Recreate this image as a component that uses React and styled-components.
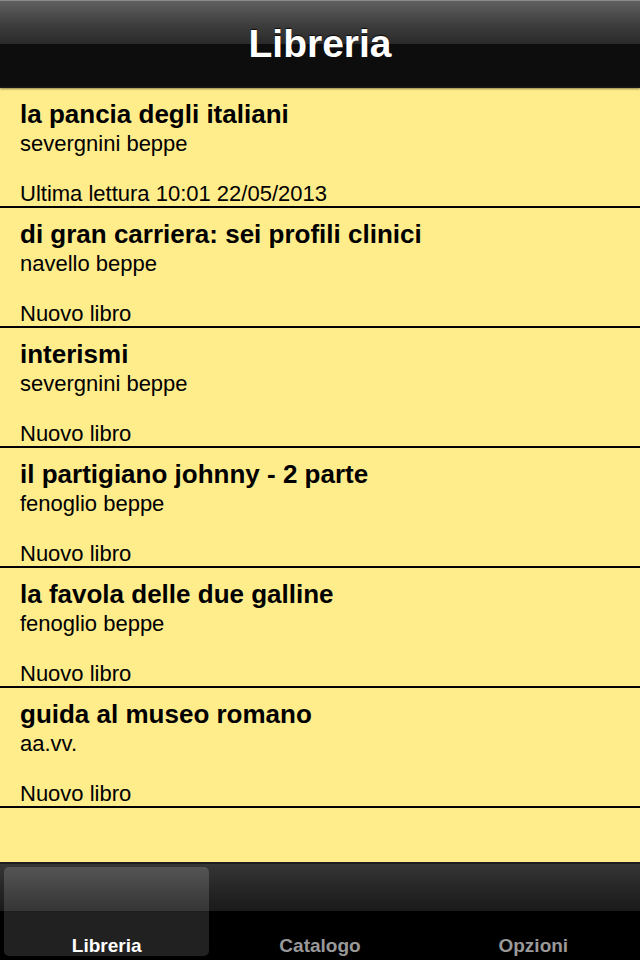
import styled, { createGlobalStyle } from 'styled-components';

const books = [
	{ title: 'la pancia degli italiani', author: 'severgnini beppe', status: 'Ultima lettura 10:01 22/05/2013' },
	{ title: 'di gran carriera: sei profili clinici', author: 'navello beppe', status: 'Nuovo libro' },
	{ title: 'interismi', author: 'severgnini beppe', status: 'Nuovo libro' },
	{ title: 'il partigiano johnny - 2 parte', author: 'fenoglio beppe', status: 'Nuovo libro' },
	{ title: 'la favola delle due galline', author: 'fenoglio beppe', status: 'Nuovo libro' },
	{ title: 'guida al museo romano', author: 'aa.vv.', status: 'Nuovo libro' },
];

const tabs = ['Libreria', 'Catalogo', 'Opzioni'];

function App() {
	return (
		<>
			<GlobalStyle />
			<Screen>
				<NavBar>
					<NavTitle>Libreria</NavTitle>
				</NavBar>
				<List>
					{books.map((book, i) => (
						<Row key={i}>
							<Title>{book.title}</Title>
							<Author>{book.author}</Author>
							<Status>{book.status}</Status>
						</Row>
					))}
				</List>
				<TabBar>
					{tabs.map((tab, i) => (
						<Tab key={tab} active={i === 0}>
							<TabLabel active={i === 0}>{tab}</TabLabel>
						</Tab>
					))}
				</TabBar>
			</Screen>
		</>
	);
}

export default App;

const GlobalStyle = createGlobalStyle`
	html, body {
		margin: 0;
		padding: 0;
		background: #000;
	}
	* {
		box-sizing: border-box;
	}
`;

const Screen = styled.div`
	width: 640px;
	height: 960px;
	display: flex;
	flex-direction: column;
	font-family: 'Liberation Sans', Arial, sans-serif;
	background: #ffec8b;
	overflow: hidden;
`;

const NavBar = styled.div`
	height: 88px;
	flex-shrink: 0;
	display: flex;
	justify-content: center;
	padding-top: 21px;
	border-top: 1px solid #8a8a8a;
	background: linear-gradient(
		to bottom,
		#606060 0px,
		#3c3c3c 25px,
		#2a2a2a 43px,
		#0d0d0d 43px,
		#0d0d0d 85px,
		#1c1c1c 87px
	);
	box-shadow: 0 1px 2px rgba(0, 0, 0, 0.45);
	position: relative;
	z-index: 1;
`;

const NavTitle = styled.h1`
	margin: 0;
	font-size: 39px;
	line-height: 44px;
	font-weight: bold;
	color: #fff;
	text-shadow: 0 -1px 1px rgba(0, 0, 0, 0.8);
`;

const List = styled.div`
	flex: 1;
	display: flex;
	flex-direction: column;
`;

const Row = styled.div`
	height: 120px;
	flex-shrink: 0;
	display: flex;
	flex-direction: column;
	padding: 11px 20px 0;
	border-bottom: 2px solid #000;
	color: #000;
`;

const Title = styled.div`
	font-size: 26px;
	line-height: 30px;
	font-weight: bold;
	white-space: nowrap;
`;

const Author = styled.div`
	margin-top: 2px;
	font-size: 22px;
	line-height: 26px;
`;

const Status = styled.div`
	margin-top: auto;
	margin-bottom: -1px;
	font-size: 22px;
	line-height: 26px;
`;

const TabBar = styled.div`
	height: 98px;
	flex-shrink: 0;
	display: grid;
	grid-template-columns: repeat(3, 1fr);
	border-top: 2px solid #1e1e1e;
	background: linear-gradient(to bottom, #363636 0px, #262626 24px, #1a1a1a 47px, #000 47px, #000 100%);
`;

const Tab = styled.div`
	display: flex;
	flex-direction: column;
	justify-content: flex-end;
	align-items: center;
	margin: 3px 4px 4px;
	border-radius: 5px;
	background: ${(props) =>
		props.active
			? 'linear-gradient(to bottom, rgba(255,255,255,0.16) 0px, rgba(255,255,255,0.12) 44px, rgba(255,255,255,0.13) 45px, rgba(255,255,255,0.13) 100%)'
			: 'transparent'};
`;

const TabLabel = styled.span`
	font-size: 19px;
	line-height: 22px;
	font-weight: bold;
	color: ${(props) => (props.active ? '#fff' : '#999')};
	margin-bottom: -1px;
`;
